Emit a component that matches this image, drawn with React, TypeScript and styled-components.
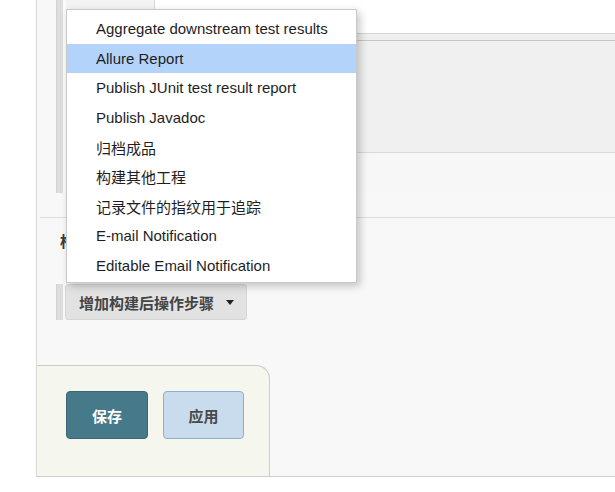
import React from "react";
import styled, { createGlobalStyle } from "styled-components";

const GlobalStyle = createGlobalStyle`
  html, body { margin: 0; padding: 0; background: #ffffff; }
  body { font-family: "Liberation Sans", Arial, "Noto Sans CJK SC", sans-serif; }
  * { box-sizing: border-box; }
`;

const Page = styled.div`
  position: relative;
  display: flex;
  width: 615px;
  height: 492px;
  overflow: hidden;
  background: #ffffff;
`;

const Gutter = styled.div`
  width: 36px;
  flex: none;
  background: #ffffff;
`;

const Main = styled.div`
  flex: 1;
  height: 477px;
  display: flex;
  flex-direction: column;
  background: #f8f8f8;
  border-left: 1px solid #d8d8d8;
  border-bottom: 1px solid #cfcfcf;
`;

const Section = styled.div`
  display: flex;
  height: 193px;
  padding-left: 19px;
`;

const Strip = styled.div<{ $h?: number }>`
  width: 7px;
  flex: none;
  height: ${(p) => (p.$h ? `${p.$h}px` : "100%")};
  background: #dddddd;
  border-left: 1px solid #d2d2d2;
`;

const StripGap = styled.div`
  width: 3px;
  flex: none;
  background: #fbfbfb;
`;

const SectionBody = styled.div`
  flex: 1;
  display: flex;
  flex-direction: column;
`;

const TopRow = styled.div`
  display: flex;
  height: 34px;
  border-bottom: 1px solid #d6d6d6;
`;

const LabelCell = styled.div`
  width: 89px;
  background: #f3f3f3;
  border-right: 1px solid #d8d8d8;
`;

const ValueCell = styled.div`
  flex: 1;
  background: #ffffff;
`;

const Seam = styled.div`
  height: 7px;
  background: #efefef;
  border-bottom: 1px solid #c6c6c6;
`;

const GrayBand = styled.div`
  height: 112px;
  background: #f0f0f0;
  border-bottom: 1px solid #dadada;
`;

const PaleBand = styled.div`
  flex: 1;
  background: #f7f7f7;
`;

const Divider = styled.div`
  margin-top: 24px;
  margin-left: 3px;
  border-top: 1px solid #dcdcdc;
`;

const Heading = styled.div`
  padding: 14px 0 0 23px;
  line-height: 20px;
  font-size: 15px;
  font-weight: bold;
  color: #3a3a3a;
`;

const ButtonRow = styled.div`
  display: flex;
  align-items: stretch;
  gap: 2px;
  margin-top: 32px;
  padding-left: 19px;
  height: 36px;
`;

const AddButton = styled.button`
  display: flex;
  align-items: center;
  gap: 12px;
  height: 36px;
  padding: 0 12px 0 13px;
  border: 1px solid #d6d6d6;
  border-radius: 3px;
  background: #e2e2e2;
  color: #444444;
  font-family: inherit;
  font-size: 15px;
  font-weight: bold;
  cursor: pointer;
`;

const Caret = styled.span`
  width: 0;
  height: 0;
  border-left: 4px solid transparent;
  border-right: 4px solid transparent;
  border-top: 5px solid #222222;
`;

const BottomBar = styled.div`
  margin-top: auto;
  width: 233px;
  height: 111px;
  display: flex;
  align-items: flex-start;
  gap: 15px;
  padding: 25px 0 0 29px;
  background: #f5f7ef;
  border-top: 1px solid #c4d2c4;
  border-right: 1px solid #c4d2c4;
  border-top-right-radius: 14px;
`;

const ActionButton = styled.button<{ $primary?: boolean }>`
  width: ${(p) => (p.$primary ? "82px" : "81px")};
  height: 48px;
  border-radius: 4px;
  border: 1px solid ${(p) => (p.$primary ? "#3b6673" : "#8eaecb")};
  background: ${(p) => (p.$primary ? "#467a8b" : "#c9dcee")};
  color: ${(p) => (p.$primary ? "#ffffff" : "#4a4a4a")};
  font-family: inherit;
  font-size: 15px;
  font-weight: bold;
  cursor: pointer;
`;

const Menu = styled.ul`
  position: absolute;
  left: 66px;
  top: 9px;
  width: 291px;
  height: 274px;
  margin: 0;
  padding: 4px 0 2px;
  list-style: none;
  background: #ffffff;
  border: 1px solid #c9c9c9;
  box-shadow: 3px 3px 8px rgba(0, 0, 0, 0.22);
`;

const MenuItem = styled.li<{ $active?: boolean }>`
  display: flex;
  align-items: center;
  height: 29.6px;
  padding-left: 29px;
  font-size: 15px;
  color: #1e1e1e;
  white-space: nowrap;
  background: ${(p) => (p.$active ? "#b3d3fb" : "transparent")};
`;

const items = [
  "Aggregate downstream test results",
  "Allure Report",
  "Publish JUnit test result report",
  "Publish Javadoc",
  "归档成品",
  "构建其他工程",
  "记录文件的指纹用于追踪",
  "E-mail Notification",
  "Editable Email Notification",
];

export default function App() {
  return (
    <>
      <GlobalStyle />
      <Page>
        <Gutter />
        <Main>
          <Section>
            <Strip />
            <StripGap />
            <SectionBody>
              <TopRow>
                <LabelCell />
                <ValueCell />
              </TopRow>
              <Seam />
              <GrayBand />
              <PaleBand />
            </SectionBody>
          </Section>
          <Divider />
          <Heading>构建后操作</Heading>
          <ButtonRow>
            <Strip $h={36} />
            <AddButton>
              增加构建后操作步骤
              <Caret />
            </AddButton>
          </ButtonRow>
          <BottomBar>
            <ActionButton $primary>保存</ActionButton>
            <ActionButton>应用</ActionButton>
          </BottomBar>
        </Main>
        <Menu>
          {items.map((t, i) => (
            <MenuItem key={t} $active={i === 1}>
              {t}
            </MenuItem>
          ))}
        </Menu>
      </Page>
    </>
  );
}
